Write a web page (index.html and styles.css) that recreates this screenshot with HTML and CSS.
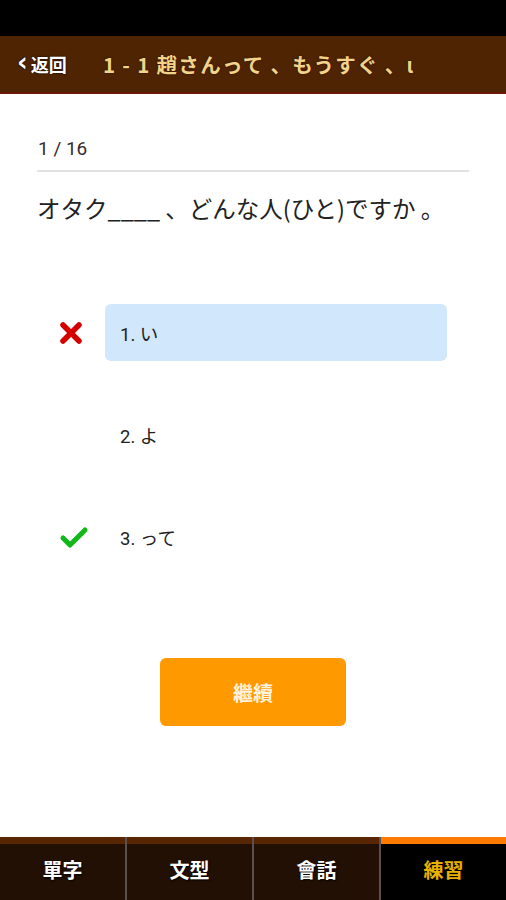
FILE: index.html
```html
<!DOCTYPE html>
<html lang="ja">
<head>
<meta charset="utf-8">
<link rel="stylesheet" href="styles.css">
</head>
<body>
<div class="app">
  <div class="status"></div>
  <header class="header">
    <div class="back"><span class="chev">‹</span>返回</div>
    <div class="title">1 - 1 趙さんって 、もうすぐ 、ι</div>
  </header>
  <main class="main">
    <div class="counter">1 / 16</div>
    <div class="question">オタク____ 、どんな人(ひと)ですか 。</div>
    <div class="options">
      <div class="option">
        <div class="mark">
          <svg width="24" height="24" viewBox="0 0 24 24"><path d="M4 4 L20 20 M20 4 L4 20" stroke="#d40000" stroke-width="5.5" stroke-linecap="round"/></svg>
        </div>
        <div class="opt-box selected">1. い</div>
      </div>
      <div class="option">
        <div class="mark"></div>
        <div class="opt-box">2. よ</div>
      </div>
      <div class="option">
        <div class="mark">
          <svg width="30" height="24" viewBox="0 0 30 24"><path d="M4 13 L11 20 L26 5" fill="none" stroke="#10b818" stroke-width="5" stroke-linecap="round" stroke-linejoin="round"/></svg>
        </div>
        <div class="opt-box">3. って</div>
      </div>
    </div>
    <div class="btn-wrap"><div class="btn">繼續</div></div>
  </main>
  <nav class="tabs">
    <div class="tab">單字</div>
    <div class="tab">文型</div>
    <div class="tab">會話</div>
    <div class="tab active">練習</div>
  </nav>
</div>
</body>
</html>
```

FILE: styles.css
```css
* { box-sizing: border-box; margin: 0; padding: 0; }
html, body { width: 506px; height: 900px; overflow: hidden; background: #fff; }
body { font-family: "Roboto", "Noto Sans CJK JP", sans-serif; }
.app { display: flex; flex-direction: column; height: 900px; }
.status { height: 36px; background: #000; flex: none; }
.header {
  height: 58px; flex: none; background: #4e2402;
  border-bottom: 2px solid #6b1808;
  display: flex; align-items: center; padding-left: 17px;
}
.back {
  color: #fff; font-weight: bold; font-size: 18px;
  font-family: "Noto Sans CJK TC", sans-serif;
  display: flex; align-items: center; width: 86px;
  text-shadow: 0 0 2px #000;
}
.chev { font-size: 26px; font-weight: bold; margin-right: 3px; line-height: 1; margin-top: -4px; font-family: "DejaVu Sans", sans-serif; }
.title {
  color: #f2d38a; font-weight: bold; font-size: 20.5px;
  font-family: "Noto Sans CJK JP", sans-serif; letter-spacing: 1.3px;
  text-shadow: 0 0 2px #2a1000;
}
.main { flex: 1; padding: 0 37px; display: flex; flex-direction: column; }
.counter {
  margin-top: 43px; font-size: 19px; color: #3a2a2a; padding-left: 1px;
  padding-bottom: 10px; border-bottom: 2px solid #e2e2e2;
}
.question { margin-top: 18px; font-size: 23.5px; color: #222; font-family: "Noto Sans CJK JP", sans-serif; line-height: 36px; white-space: nowrap; }
.options { margin-top: 78px; display: flex; flex-direction: column; gap: 45px; }
.option { display: flex; align-items: center; height: 57px; }
.mark { width: 68px; display: flex; justify-content: flex-start; padding-left: 22px; }
.opt-box {
  width: 342px; height: 57px; border-radius: 6px;
  display: flex; align-items: center; padding-left: 15px;
  font-size: 18.5px; color: #222; font-family: "Roboto", "Noto Sans CJK JP", sans-serif;
}
.opt-box.selected { background: #d0e7fc; }
.btn-wrap { display: flex; justify-content: center; margin-top: 93px; }
.btn {
  width: 186px; height: 68px; background: #ff9900; border-radius: 6px;
  color: #fff3e0; font-weight: bold; font-size: 20px;
  font-family: "Noto Sans CJK TC", sans-serif;
  display: flex; align-items: center; justify-content: center;
}
.tabs { height: 63px; flex: none; display: flex; gap: 2px; background: #5a5050; }
.tab {
  flex: 1; background: #221004; border-top: 7px solid #582600;
  color: #fff; font-weight: bold; font-size: 20px;
  font-family: "Noto Sans CJK TC", sans-serif;
  display: flex; align-items: center; justify-content: center;
  padding-bottom: 6px; text-shadow: 1px 1px 2px #000;
}
.tab.active { background: #000; border-top-color: #ff7a00; color: #e8b000; }
```
